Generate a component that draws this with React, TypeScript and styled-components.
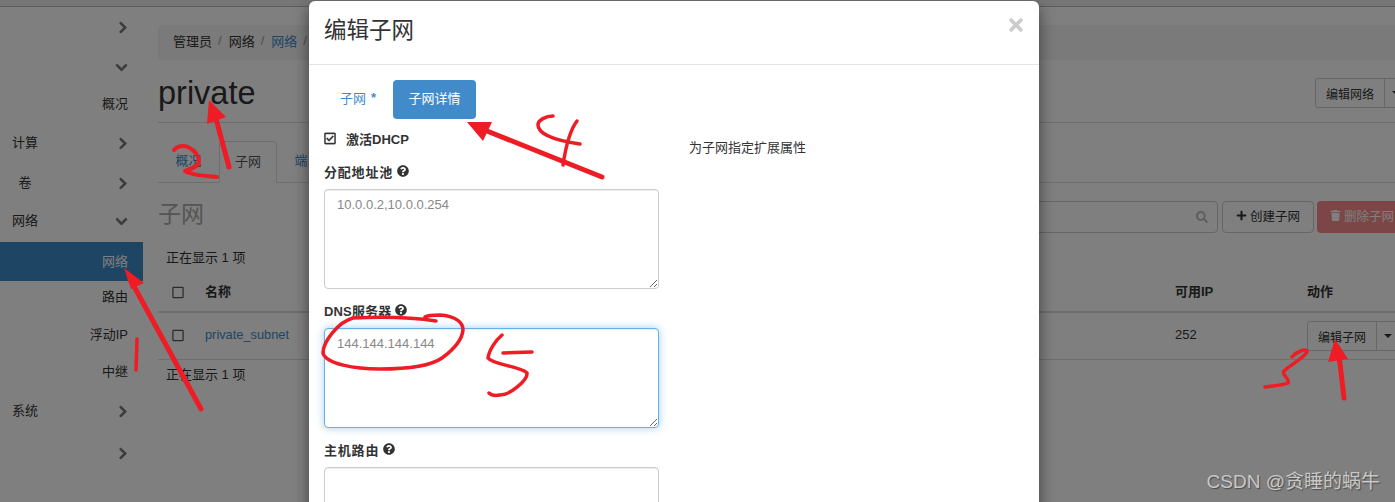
import React from 'react';
import styled, { createGlobalStyle } from 'styled-components';
import {
  FaChevronDown,
  FaChevronRight,
  FaPlus,
  FaQuestionCircle,
  FaRegCheckSquare,
  FaRegSquare,
  FaSearch,
  FaTimes,
  FaTrash,
} from 'react-icons/fa';

const navRows = [
  { height: 39, chevron: 'right' },
  { height: 41, chevron: 'down' },
  { height: 31, sub: '概况' },
  { height: 48, label: '计算', chevron: 'right' },
  { height: 33, label: '卷', chevron: 'right' },
  { height: 43, label: '网络', chevron: 'down' },
  { height: 39, sub: '网络', active: true },
  { height: 28, sub: '路由' },
  { height: 48, sub: '浮动IP' },
  { height: 26, sub: '中继' },
  { height: 54, label: '系统', chevron: 'right' },
  { height: 30, chevron: 'right' },
];

export default function App() {
  return (
    <>
      <GlobalStyle />
      <Page>
        <TopBar />
        <Body>
          <Sidebar>
            {navRows.map((row, i) => (
              <NavRow key={i} $height={row.height} $active={row.active}>
                {row.label && <NavLabel>{row.label}</NavLabel>}
                {row.sub && <NavSub>{row.sub}</NavSub>}
                {row.chevron === 'right' && <ChevronRight />}
                {row.chevron === 'down' && <ChevronDown />}
              </NavRow>
            ))}
          </Sidebar>
          <Main>
            <Breadcrumb>
              <span>管理员</span>
              <Slash>/</Slash>
              <span>网络</span>
              <Slash>/</Slash>
              <CrumbLink>网络</CrumbLink>
              <Slash>/</Slash>
            </Breadcrumb>
            <PageHeader>
              <PageTitle>private</PageTitle>
              <HeaderButton>
                <SplitMain>编辑网络</SplitMain>
                <SplitCaret><Caret /></SplitCaret>
              </HeaderButton>
            </PageHeader>
            <Tabs>
              <TabLink>概况</TabLink>
              <TabActive>子网</TabActive>
              <TabLink>端口</TabLink>
            </Tabs>
            <SectionHead>
              <SectionTitle>子网</SectionTitle>
              <Toolbar>
                <SearchBox><FaSearch /></SearchBox>
                <ToolButton><FaPlus />创建子网</ToolButton>
                <DeleteButton><FaTrash />删除子网</DeleteButton>
              </Toolbar>
            </SectionHead>
            <Count>正在显示 1 项</Count>
            <TableHead>
              <CheckCell $top={5}><FaRegSquare /></CheckCell>
              <span>名称</span>
              <span>可用IP</span>
              <span>动作</span>
            </TableHead>
            <TableRow>
              <CheckCell $top={2}><FaRegSquare /></CheckCell>
              <RowLink>private_subnet</RowLink>
              <span>252</span>
              <RowButton>
                <SplitMain>编辑子网</SplitMain>
                <SplitCaret><Caret /></SplitCaret>
              </RowButton>
            </TableRow>
            <FooterCount>正在显示 1 项</FooterCount>
          </Main>
        </Body>

        <Backdrop />

        <Modal>
          <ModalHeader>
            <ModalTitle>编辑子网</ModalTitle>
            <CloseIcon />
          </ModalHeader>
          <ModalBody>
            <Pills>
              <PillLink>子网<Star>*</Star></PillLink>
              <PillActive>子网详情</PillActive>
            </Pills>
            <FormColumns>
              <FormLeft>
                <CheckRow>
                  <FaRegCheckSquare />
                  <strong>激活DHCP</strong>
                </CheckRow>
                <FieldLabel $spacing={0.8}>分配地址池 <FaQuestionCircle /></FieldLabel>
                <TextBox rows={1} placeholder="10.0.0.2,10.0.0.254" readOnly />
                <FieldLabel $spacing={0.15}>DNS服务器 <FaQuestionCircle /></FieldLabel>
                <TextBox rows={1} placeholder="144.144.144.144" readOnly $focused />
                <FieldLabel $spacing={0.8}>主机路由 <FaQuestionCircle /></FieldLabel>
                <TextBox rows={1} readOnly />
              </FormLeft>
              <FormHelp>为子网指定扩展属性</FormHelp>
            </FormColumns>
          </ModalBody>
        </Modal>

        <Strokes viewBox="0 0 1395 502" fill="none" stroke="#ee1c25" strokeLinecap="round" strokeLinejoin="round">
          {/* 1 */}
          <path strokeWidth="5" d="M201 409L130 279" />
          <path stroke="none" fill="#ee1c25" d="M124 268L144 283L131 289Z" />
          <path strokeWidth="3.5" d="M137 339L136 370" />
          {/* 2 */}
          <path strokeWidth="4" d="M174 150C177 146 183 145 188 147C194 150 199 155 199 162C198 167 190 169 185 171C190 175 205 176 217 177" />
          <path strokeWidth="5" d="M229 167L215 115" />
          <path stroke="none" fill="#ee1c25" d="M209 100L226 117L207 124Z" />
          {/* 3 */}
          <path strokeWidth="5" d="M1344 398L1339 355" />
          <path stroke="none" fill="#ee1c25" d="M1335 339L1348 359L1328 362Z" />
          <path strokeWidth="3.5" d="M1265 387C1272 386 1284 385 1288 383C1290 378 1281 375 1284 371C1290 365 1304 358 1307 352C1307 347 1296 352 1292 357" />
          {/* 4 */}
          <path strokeWidth="5" d="M602 177L482 129" />
          <path stroke="none" fill="#ee1c25" d="M467 122L492 122L483 141Z" />
          <path strokeWidth="3.5" d="M553 116C546 116 538 120 538 125C538 133 552 140 580 144" />
          <path strokeWidth="3.5" d="M577 121C570 130 566 145 563 165" />
          {/* 5 */}
          <path strokeWidth="3.5" d="M436 321C410 317 375 317 353 318C338 322 323 342 323 353C326 364 355 369 380 369C410 369 432 365 442 358C453 350 462 340 463 330C463 322 455 316 440 315C433 315 428 315 425 317" />
          <path strokeWidth="3.5" d="M502 335C496 340 489 350 488 358C493 365 520 366 527 373C528 380 510 395 500 395C495 396 491 395 489 393" />
          <path strokeWidth="3.5" d="M503 353L532 352" />
        </Strokes>

        <Watermark>CSDN @贪睡的蜗牛</Watermark>
      </Page>
    </>
  );
}

const GlobalStyle = createGlobalStyle`
  html, body {
    margin: 0;
    padding: 0;
    background: #fff;
  }
  * {
    box-sizing: border-box;
  }
`;

const sans = `"Liberation Sans", "Noto Sans CJK SC", sans-serif`;

const Page = styled.div`
  position: relative;
  width: 1395px;
  height: 502px;
  overflow: hidden;
  font-family: ${sans};
  font-size: 13px;
  color: #333;
`;

const TopBar = styled.div`
  height: 7px;
  background: #ececec;
  border-bottom: 1px solid #bbb;
`;

const Body = styled.div`
  display: flex;
`;

const Sidebar = styled.nav`
  flex: 0 0 143px;
`;

const NavRow = styled.div<{ $height: number; $active?: boolean }>`
  display: flex;
  align-items: center;
  height: ${(p) => p.$height}px;
  padding: 0 15px ${(p) => (p.$active ? 3 : 0)}px 12px;
  background: ${(p) => (p.$active ? '#3f8ac9' : 'transparent')};
  color: ${(p) => (p.$active ? '#fff' : '#333')};
`;

const NavLabel = styled.span`
  min-width: 26px;
  padding-bottom: 2px;
  text-align: center;
`;

const NavSub = styled.span`
  margin-left: auto;
`;

const ChevronRight = styled(FaChevronRight)`
  margin: 2px -1px 0 auto;
  width: 12px;
  height: 13px;
  color: #777;
  stroke: currentColor;
  stroke-width: 30px;
`;

const ChevronDown = styled(FaChevronDown)`
  margin: 2px 0 0 auto;
  width: 13px;
  height: 13px;
  color: #777;
  stroke: currentColor;
  stroke-width: 30px;
`;

const Main = styled.main`
  flex: 0 0 1248px;
  margin-left: 15px;
  padding-top: 18px;
`;

const Breadcrumb = styled.div`
  display: flex;
  align-items: center;
  height: 35px;
  padding: 0 0 5px 15px;
  background: #f5f5f5;
  border-radius: 4px;
`;

const Slash = styled.span`
  margin: 0 7px 0 6px;
  color: #999;
`;

const CrumbLink = styled.span`
  color: #3f8ac9;
`;

const PageHeader = styled.div`
  display: flex;
  align-items: center;
  justify-content: space-between;
  height: 63px;
  border-bottom: 1px solid #ddd;
`;

const PageTitle = styled.h1`
  margin: 0;
  padding-top: 4px;
  font-size: 32.5px;
  font-weight: 400;
  line-height: 1;
`;

const SplitButton = styled.div`
  display: flex;
  height: 30px;
  border: 1px solid #ccc;
  border-radius: 3px;
  background: #fff;
`;

const HeaderButton = styled(SplitButton)`
  margin: 4px -1px 0 0;
`;

const RowButton = styled(SplitButton)`
  margin-top: 4px;
`;

const SplitMain = styled.span`
  display: flex;
  align-items: center;
  padding: 0 10px;
  font-size: 12px;
  border-right: 1px solid #ccc;
`;

const SplitCaret = styled.span`
  display: flex;
  align-items: center;
  justify-content: center;
  width: 21px;
`;

const Caret = styled.i`
  width: 0;
  height: 0;
  border-top: 4px solid #333;
  border-left: 4px solid transparent;
  border-right: 4px solid transparent;
`;

const Tabs = styled.div`
  display: flex;
  align-items: stretch;
  height: 42px;
  margin-top: 18px;
  border-bottom: 1px solid #ddd;
`;

const TabLink = styled.span`
  display: flex;
  align-items: center;
  justify-content: center;
  width: 61px;
  padding: 0 15px 4px;
  color: #3f8ac9;
  white-space: nowrap;
`;

const TabActive = styled(TabLink)`
  width: 58px;
  height: 42px;
  color: #555;
  background: #fff;
  border: 1px solid #ddd;
  border-bottom-color: #fff;
  border-radius: 4px 4px 0 0;
`;

const SectionHead = styled.div`
  display: flex;
  align-items: flex-start;
  justify-content: space-between;
  margin-top: 18px;
  height: 32px;
`;

const SectionTitle = styled.h3`
  margin: 0;
  font-size: 23px;
  font-weight: 400;
  line-height: 26px;
  color: #aaa;
`;

const Toolbar = styled.div`
  display: flex;
  gap: 4px;
  margin-right: -1px;
`;

const SearchBox = styled.div`
  display: flex;
  align-items: center;
  justify-content: flex-end;
  width: 200px;
  height: 32px;
  padding-right: 9px;
  border: 1px solid #ccc;
  border-radius: 4px;
  background: #fff;
  color: #bbb;
  font-size: 12px;
`;

const ToolButton = styled.div`
  display: flex;
  align-items: center;
  gap: 3px;
  height: 32px;
  padding: 0 13px 4px;
  border: 1px solid #ccc;
  border-radius: 4px;
  background: #fff;
  font-size: 12.5px;
  svg {
    width: 11px;
    height: 11px;
  }
`;

const DeleteButton = styled(ToolButton)`
  margin-left: -1px;
  border: 0;
  background: #f68d8a;
  color: #fff;
`;

const Count = styled.div`
  display: flex;
  align-items: center;
  height: 38px;
  margin-top: 4px;
  padding: 0 8px;
`;

const FooterCount = styled(Count)`
  height: 26px;
  margin-top: 0;
`;

const columns = `
  display: grid;
  grid-template-columns: 47px 970px 132px 1fr;
  align-items: center;
`;

const TableHead = styled.div`
  ${columns}
  height: 42px;
  margin-top: -4px;
  padding-bottom: 2px;
  border-bottom: 2px solid #ddd;
  font-weight: 700;
`;

const TableRow = styled.div`
  ${columns}
  height: 47px;
  padding-bottom: 4px;
  border-bottom: 1px solid #ddd;
`;

const CheckCell = styled.span<{ $top: number }>`
  display: flex;
  padding: ${(p) => p.$top}px 0 0 14px;
  color: #555;
  svg {
    width: 12px;
    height: 13px;
  }
`;

const RowLink = styled.span`
  font-size: 12.8px;
  color: #3f8ac9;
`;

const Backdrop = styled.div`
  position: absolute;
  inset: 0;
  background: rgba(0, 0, 0, 0.5);
`;

const Modal = styled.div`
  position: absolute;
  top: 1px;
  left: 309px;
  width: 730px;
  height: 560px;
  background: #fff;
  border-radius: 6px;
  box-shadow: 0 5px 15px rgba(0, 0, 0, 0.5);
`;

const ModalHeader = styled.div`
  display: flex;
  align-items: center;
  justify-content: space-between;
  height: 64px;
  padding: 0 15px;
  border-bottom: 1px solid #e5e5e5;
`;

const ModalTitle = styled.h4`
  margin: 0 0 10px;
  font-size: 22.5px;
  font-weight: 400;
  color: #333;
`;

const CloseIcon = styled(FaTimes)`
  width: 16px;
  height: 20px;
  margin-bottom: 16px;
  color: #ccc;
`;

const ModalBody = styled.div`
  padding: 15px;
`;

const Pills = styled.div`
  display: flex;
  align-items: stretch;
  height: 39px;
`;

const PillLink = styled.span`
  display: flex;
  align-items: center;
  gap: 5px;
  width: 69px;
  padding: 0 0 4px 16px;
  color: #428bca;
  white-space: nowrap;
`;

const Star = styled.span`
  font-weight: 700;
`;

const PillActive = styled.span`
  display: flex;
  align-items: center;
  justify-content: center;
  width: 83px;
  padding-bottom: 4px;
  background: #428bca;
  color: #fff;
  border-radius: 4px;
`;

const FormColumns = styled.div`
  display: flex;
  gap: 30px;
`;

const FormLeft = styled.div`
  flex: 0 0 335px;
`;

const FormHelp = styled.p`
  margin: 18px 0 0;
`;

const CheckRow = styled.div`
  display: flex;
  align-items: center;
  gap: 10px;
  height: 20px;
  margin: 9px 0 12px;
  svg {
    width: 12px;
    height: 13px;
    stroke: currentColor;
    stroke-width: 15px;
  }
`;

const FieldLabel = styled.label<{ $spacing: number }>`
  display: flex;
  align-items: center;
  gap: 4px;
  height: 22px;
  margin: 10px 0 7px;
  font-weight: 700;
  letter-spacing: ${(p) => p.$spacing}px;
  svg {
    width: 12px;
    height: 12px;
  }
`;

const TextBox = styled.textarea<{ $focused?: boolean }>`
  display: block;
  width: 335px;
  height: 100px;
  padding: 6px 12px;
  font-family: ${sans};
  font-size: 13px;
  line-height: 1.43;
  color: #555;
  background: #fff;
  border: 1px solid ${(p) => (p.$focused ? '#66afe9' : '#ccc')};
  border-radius: 4px;
  outline: none;
  box-shadow: ${(p) =>
    p.$focused
      ? 'inset 0 1px 1px rgba(0,0,0,.075), 0 0 8px rgba(102,175,233,.6)'
      : 'inset 0 1px 1px rgba(0,0,0,.075)'};
  &::placeholder {
    color: #888;
    opacity: 1;
  }
`;

const Strokes = styled.svg`
  position: absolute;
  inset: 0;
  width: 1395px;
  height: 502px;
  pointer-events: none;
`;

const Watermark = styled.div`
  position: absolute;
  right: 15px;
  bottom: 8px;
  font-size: 19px;
  line-height: 24px;
  color: #c8c8c8;
  text-shadow: 1px 1px 1px rgba(40, 40, 40, 0.6);
`;
